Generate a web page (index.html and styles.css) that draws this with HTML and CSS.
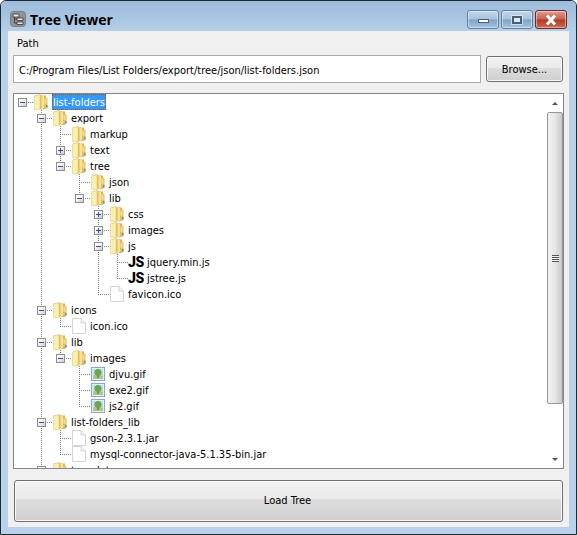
FILE: index.html
```html
<!DOCTYPE html>
<html lang="en">
<head>
  <meta charset="UTF-8" />
  <title>Tree Viewer</title>
  <link rel="stylesheet" href="styles.css">
</head>
<body>
  <svg class="defs" width="0" height="0">
    <symbol id="folder" viewBox="0 0 14 16">
      <path d="M1 1.500 L6 .5 L8 1.500 L12 1.500 L12 15 L1 15 Z" fill="#dcb653"/>
      <path d="M.5 2 L6 .5 L6 15.500 L.5 15.500 Z" fill="#fbf0b4" stroke="#e2cb80" stroke-width=".6"/>
      <path d="M6 1 L7.500 1.500 L7.500 15.500 L6 15.500 Z" fill="#e3bf62"/>
      <path d="M7.500 1.500 L10 2 L10 14 L7.500 15.500 Z" fill="#f6e29b"/>
      <path d="M10 3 L13.500 4.500 L13.500 14 L8 15.500 L10 14 Z" fill="#e6bd58"/>
      <path d="M10.500 4.500 L12.500 5.500 L12.500 10 L10.500 10 Z" fill="#f4dc8c"/>
      <path d="M12 11 L13.500 11 L13.500 13.500 L12 13.500 Z" fill="#3f9bdc"/>
    </symbol>
    <symbol id="file" viewBox="0 0 14 16">
      <path d="M.5 .5 H9 L13.500 5 V15.500 H.5 Z" fill="#fff" stroke="#d4d4d4"/>
      <path d="M9 .5 V5 H13.500" fill="#f2f2f2" stroke="#d4d4d4"/>
    </symbol>
    <symbol id="image" viewBox="0 0 14 16">
      <rect x=".5" y="1.500" width="13" height="13" fill="#e6eef8" stroke="#8aa7cf"/>
      <rect x="2" y="3" width="10" height="10" fill="#c2dbe8"/>
      <rect x="2" y="9.500" width="10" height="3.500" fill="#a6c985"/>
      <circle cx="7" cy="6.500" r="3.500" fill="#62a84c"/>
      <rect x="6" y="9.500" width="2" height="2.500" fill="#b5793c"/>
    </symbol>
  </svg>

  <div class="window">
    <div class="titlebar">
      <svg class="app-icon" width="16" height="16" viewBox="0 0 16 16">
        <rect x=".5" y=".5" width="15" height="15" rx="3" fill="#8f9499" stroke="#7a7f84"/>
        <path d="M3 3 H9 V6 H3 Z M7 7 H13 V9.500 H7 Z M7 11 H13 V13.500 H7 Z" fill="#e8e8e8" stroke="#333" stroke-width=".8"/>
        <path d="M4.500 6 V12 H7 M4.500 8 H7" fill="none" stroke="#333" stroke-width=".8"/>
      </svg>
      <span class="title">Tree Viewer</span>
      <div class="controls">
        <div class="ctl"><i class="min-glyph"></i></div>
        <div class="ctl"><i class="max-glyph"></i></div>
        <div class="ctl close">
          <svg width="16" height="12" viewBox="0 0 16 12"><path d="M4 1.500 L12 10.500 M12 1.500 L4 10.500" stroke="#fff" stroke-width="3" fill="none"/></svg>
        </div>
      </div>
    </div>

    <div class="client">
      <div class="path-label">Path</div>
      <div class="path-row">
        <div class="path-input">C:/Program Files/List Folders/export/tree/json/list-folders.json</div>
        <button class="btn browse">Browse...</button>
      </div>

      <div class="tree-box">
        <div class="tree">
          <div class="row"><i class="c h"><b class="tg"></b></i><svg class="ico"><use href="#folder"/></svg><span class="name selected">list-folders</span></div>
          <div class="row"><i class="c"></i><i class="c t"><b class="tg"></b></i><svg class="ico"><use href="#folder"/></svg><span class="name">export</span></div>
          <div class="row"><i class="c"></i><i class="c v"></i><i class="c t"></i><svg class="ico"><use href="#folder"/></svg><span class="name">markup</span></div>
          <div class="row"><i class="c"></i><i class="c v"></i><i class="c t"><b class="tg plus"></b></i><svg class="ico"><use href="#folder"/></svg><span class="name">text</span></div>
          <div class="row"><i class="c"></i><i class="c v"></i><i class="c l"><b class="tg"></b></i><svg class="ico"><use href="#folder"/></svg><span class="name">tree</span></div>
          <div class="row"><i class="c"></i><i class="c v"></i><i class="c"></i><i class="c t"></i><svg class="ico"><use href="#folder"/></svg><span class="name">json</span></div>
          <div class="row"><i class="c"></i><i class="c v"></i><i class="c"></i><i class="c l"><b class="tg"></b></i><svg class="ico"><use href="#folder"/></svg><span class="name">lib</span></div>
          <div class="row"><i class="c"></i><i class="c v"></i><i class="c"></i><i class="c"></i><i class="c t"><b class="tg plus"></b></i><svg class="ico"><use href="#folder"/></svg><span class="name">css</span></div>
          <div class="row"><i class="c"></i><i class="c v"></i><i class="c"></i><i class="c"></i><i class="c t"><b class="tg plus"></b></i><svg class="ico"><use href="#folder"/></svg><span class="name">images</span></div>
          <div class="row"><i class="c"></i><i class="c v"></i><i class="c"></i><i class="c"></i><i class="c t"><b class="tg"></b></i><svg class="ico"><use href="#folder"/></svg><span class="name">js</span></div>
          <div class="row"><i class="c"></i><i class="c v"></i><i class="c"></i><i class="c"></i><i class="c v"></i><i class="c t"></i><span class="js">JS</span><span class="name">jquery.min.js</span></div>
          <div class="row"><i class="c"></i><i class="c v"></i><i class="c"></i><i class="c"></i><i class="c v"></i><i class="c l"></i><span class="js">JS</span><span class="name">jstree.js</span></div>
          <div class="row"><i class="c"></i><i class="c v"></i><i class="c"></i><i class="c"></i><i class="c l"></i><svg class="ico"><use href="#file"/></svg><span class="name">favicon.ico</span></div>
          <div class="row"><i class="c"></i><i class="c t"><b class="tg"></b></i><svg class="ico"><use href="#folder"/></svg><span class="name">icons</span></div>
          <div class="row"><i class="c"></i><i class="c v"></i><i class="c l"></i><svg class="ico"><use href="#file"/></svg><span class="name">icon.ico</span></div>
          <div class="row"><i class="c"></i><i class="c t"><b class="tg"></b></i><svg class="ico"><use href="#folder"/></svg><span class="name">lib</span></div>
          <div class="row"><i class="c"></i><i class="c v"></i><i class="c l"><b class="tg"></b></i><svg class="ico"><use href="#folder"/></svg><span class="name">images</span></div>
          <div class="row"><i class="c"></i><i class="c v"></i><i class="c"></i><i class="c t"></i><svg class="ico"><use href="#image"/></svg><span class="name">djvu.gif</span></div>
          <div class="row"><i class="c"></i><i class="c v"></i><i class="c"></i><i class="c t"></i><svg class="ico"><use href="#image"/></svg><span class="name">exe2.gif</span></div>
          <div class="row"><i class="c"></i><i class="c v"></i><i class="c"></i><i class="c l"></i><svg class="ico"><use href="#image"/></svg><span class="name">js2.gif</span></div>
          <div class="row"><i class="c"></i><i class="c t"><b class="tg"></b></i><svg class="ico"><use href="#folder"/></svg><span class="name">list-folders_lib</span></div>
          <div class="row"><i class="c"></i><i class="c v"></i><i class="c t"></i><svg class="ico"><use href="#file"/></svg><span class="name">gson-2.3.1.jar</span></div>
          <div class="row"><i class="c"></i><i class="c v"></i><i class="c l"></i><svg class="ico"><use href="#file"/></svg><span class="name">mysql-connector-java-5.1.35-bin.jar</span></div>
          <div class="row"><i class="c"></i><i class="c t"><b class="tg"></b></i><svg class="ico"><use href="#folder"/></svg><span class="name">templates</span></div>
        </div>
        <div class="scrollbar">
          <div class="arrow up"></div>
          <div class="thumb"><i class="grip"></i></div>
          <div class="arrow down"></div>
        </div>
      </div>

      <button class="btn load">Load Tree</button>
    </div>
  </div>
</body>
</html>
```

FILE: styles.css
```css
body {
  margin: 0;
  background: #fff;
  font-family: 'DejaVu Sans', sans-serif;
  font-stretch: condensed;
  font-size: 11px;
  color: #000;
}
.defs {
  position: absolute;
}
.window {
  width: 577px;
  height: 535px;
  box-sizing: border-box;
  display: flex;
  flex-direction: column;
  background: #b9d2ea;
  border: 1px solid #1c2a33;
  border-radius: 6px 6px 0 0;
  overflow: hidden;
}

/* title bar */
.titlebar {
  height: 30px;
  flex: none;
  display: flex;
  align-items: center;
  box-sizing: border-box;
  padding: 0 9px 0 8px;
  background: linear-gradient(to bottom, #9dbcdb 0%, #a9c6e2 60%, #b6cfe8 100%);
}
.app-icon {
  margin-left: 1px;
  margin-top: 6px;
}
.title {
  font-family: 'Open Sans', sans-serif;
  font-stretch: normal;
  font-weight: 700;
  font-size: 14px;
  margin-left: 4px;
  margin-top: 6px;
}
.controls {
  margin-left: auto;
  margin-top: 7px;
  display: flex;
  gap: 2px;
}
.ctl {
  width: 30px;
  height: 17px;
  border: 1px solid #5f7f9f;
  border-radius: 3px;
  background: linear-gradient(to bottom, #c3d8ec 0%, #a7c3de 48%, #7fa2c4 52%, #a5c4e0 100%);
  box-shadow: inset 0 0 0 1px rgba(255,255,255,0.45);
  display: flex;
  align-items: center;
  justify-content: center;
}
.min-glyph {
  display: block;
  width: 9px;
  height: 2px;
  margin-top: 3px;
  background: #fff;
  border: 1px solid #4c5f73;
}
.max-glyph {
  display: block;
  width: 6px;
  height: 4px;
  background: #dfe9f3;
  border: 2px solid #4c5f73;
  outline: 1px solid rgba(255,255,255,0.5);
}
.ctl.close {
  border-color: #6b2b22;
  background: linear-gradient(to bottom, #dd9e93 0%, #c8614f 48%, #b03a26 52%, #cf6b52 100%);
}

/* client area */
.client {
  flex: 1;
  margin: 0 7px 7px 7px;
  background: #f0f0f0;
  padding: 0 5px 5px 5px;
  display: flex;
  flex-direction: column;
}
.path-label {
  height: 24px;
  line-height: 25px;
  padding-left: 4px;
}
.path-row {
  display: flex;
  align-items: center;
  justify-content: space-between;
  height: 28px;
}
.path-input {
  width: 468px;
  height: 28px;
  box-sizing: border-box;
  border: 1px solid #ababab;
  background: #fff;
  line-height: 29px;
  padding-left: 5px;
}
.btn {
  display: block;
  font-family: inherit;
  font-stretch: inherit;
  font-size: 11px;
  color: #000;
  border: 1px solid #707070;
  border-radius: 3px;
  background: linear-gradient(to bottom, #f2f2f2 0%, #ebebeb 44%, #dddddd 45%, #cfcfcf 100%);
  box-shadow: inset 0 0 0 1px #fafafa;
}
.browse {
  width: 77px;
  height: 26px;
  margin-right: 1px;
}
.load {
  height: 42px;
  width: 549px;
  margin: 11px 0 0 1px;
  padding: 0 2px 2px 0;
}

/* tree */
.tree-box {
  height: 376px;
  margin-top: 10px;
  box-sizing: border-box;
  border: 1px solid #828790;
  background: #fff;
  display: flex;
}
.tree {
  flex: 1;
  overflow: hidden;
  padding-left: 1px;
}
.row {
  height: 16px;
  display: flex;
  align-items: center;
  white-space: nowrap;
}
.c {
  display: block;
  position: relative;
  flex: none;
  width: 19px;
  height: 16px;
}
.c::before,
.c::after {
  content: '';
  position: absolute;
  left: 7px;
  display: none;
}
.c.v::before,
.c.t::before,
.c.l::before {
  display: block;
  top: 0;
  width: 1px;
  height: 16px;
  background: repeating-linear-gradient(to bottom, #808080 0 1px, transparent 1px 2px);
}
.c.l::before {
  height: 9px;
}
.c.t::after,
.c.l::after,
.c.h::after {
  display: block;
  top: 8px;
  width: 12px;
  height: 1px;
  background: repeating-linear-gradient(to right, #808080 0 1px, transparent 1px 2px);
}
.tg {
  position: absolute;
  left: 3px;
  top: 4px;
  z-index: 1;
  width: 7px;
  height: 7px;
  border: 1px solid #8e8f8f;
  background: linear-gradient(135deg, #fff 0%, #f0f0f0 50%, #c9c9c9 100%);
}
.tg::before {
  content: '';
  position: absolute;
  left: 1px;
  top: 3px;
  width: 5px;
  height: 1px;
  background: #2f4f9f;
}
.tg.plus::after {
  content: '';
  position: absolute;
  left: 3px;
  top: 1px;
  width: 1px;
  height: 5px;
  background: #2f4f9f;
}
.ico {
  flex: none;
  width: 14px;
  height: 16px;
}
.js {
  flex: none;
  width: 16px;
  margin-left: -1px;
  font-family: Roboto, sans-serif;
  font-stretch: normal;
  font-weight: 900;
  font-size: 14px;
  letter-spacing: -0.4px;
  line-height: 16px;
}
.js + .name {
  margin-left: 2px;
}
.name {
  margin-left: 3px;
  padding: 0 1px;
  height: 16px;
  line-height: 18px;
  box-sizing: border-box;
}
.name.selected {
  margin-left: 4px;
  background: #3399ff;
  color: #fff;
  outline: 1px dotted #a0550a;
  outline-offset: -1px;
  width: 54px;
}

/* scrollbar */
.scrollbar {
  width: 17px;
  flex: none;
  background: #fff;
  display: flex;
  flex-direction: column;
}
.arrow {
  height: 18px;
  flex: none;
  position: relative;
}
.arrow::before {
  content: '';
  position: absolute;
  left: 6px;
  top: 8px;
  border-left: 3px solid transparent;
  border-right: 3px solid transparent;
}
.arrow.up::before {
  border-bottom: 3px solid #555;
}
.arrow.down::before {
  border-top: 3px solid #555;
}
.thumb {
  height: 290px;
  margin: 0 0 auto 1px;
  border: 1px solid #979797;
  border-radius: 2px;
  background: linear-gradient(to right, #f1f1f1 0%, #e6e6e6 50%, #c9c9c9 100%);
  display: flex;
  align-items: center;
  justify-content: center;
}
.grip {
  display: block;
  width: 7px;
  height: 7px;
  background: repeating-linear-gradient(to bottom, #555 0 1px, #eee 1px 2px);
}
```
